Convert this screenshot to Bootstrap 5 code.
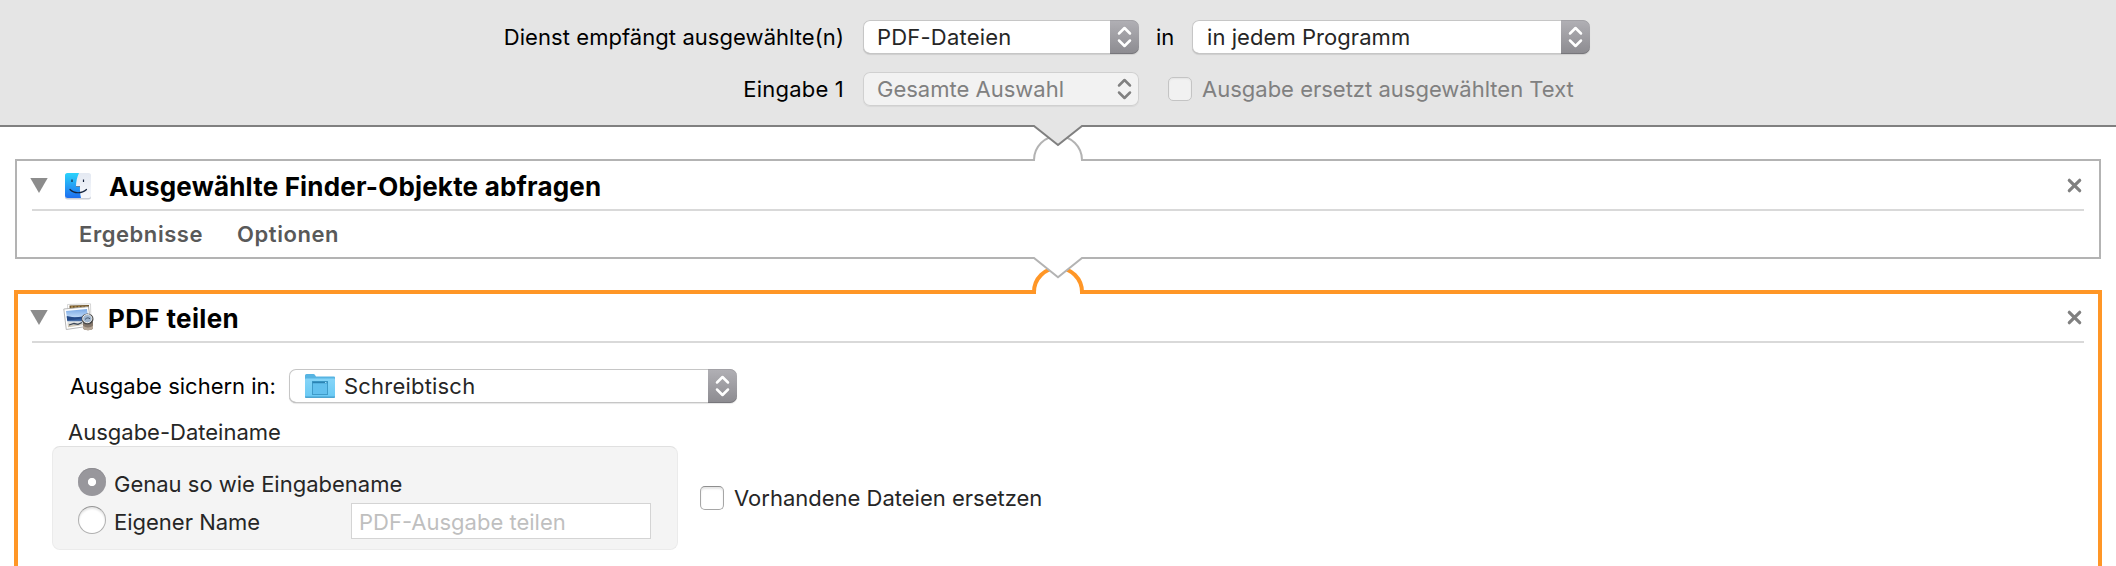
<!DOCTYPE html>
<html lang="de">
<head>
<meta charset="utf-8">
<title>Dienst</title>
<link href="https://cdn.jsdelivr.net/npm/bootstrap@5.3.0/dist/css/bootstrap.min.css" rel="stylesheet">
<style>
body{font:400 22px/34px Inter,"Liberation Sans",sans-serif;color:#262626;background:#fff;height:566px;overflow:hidden;white-space:nowrap}
.topbar{height:127px;background:#e5e5e5;border-bottom:2px solid #808080;padding-top:20px;color:#000}
.topline{height:34px;margin-bottom:18px}
.lead-label{width:844px}
.popup{height:34px;padding:0;font-size:22px;line-height:34px;color:#262626;text-align:left;background:#fff;border:0;border-radius:7px;box-shadow:inset 0 0 0 1px #c6c6c6,inset 0 -1px 0 #a9a9a9,0 1px 1px rgba(0,0,0,.1);overflow:hidden}
.popup:disabled{opacity:1;color:#808080;background:#f2f2f2;box-shadow:inset 0 0 0 1px #d0d0d0,0 1px 1px rgba(0,0,0,.06)}
.popup .stepper{width:29px;height:34px;background:linear-gradient(#b1b0b5,#8c8b90);box-shadow:inset 0 -1px 0 #77767b,inset 0 1px 0 #a2a1a6;border-radius:0 7px 7px 0}
.popup:disabled .stepper{background:none;box-shadow:none}
.box24.form-check-input{width:24px;height:24px;margin:0;border:1px solid #a6a6a6;border-top-color:#8e8e8e;border-radius:5px;background:#fff;box-shadow:inset 0 2px 2px rgba(0,0,0,.1)}
.box24.form-check-input:disabled{opacity:1;border-color:#c4c4c4;background:#f1f1f1;box-shadow:inset 0 1px 2px rgba(0,0,0,.06)}
.dim{color:#808080}
.action{border:2px solid #b3b3b3;position:relative}
.action.selected{border:4px solid #ff9626;margin:0 -1px;height:300px}
.action-head{height:50px;border-bottom:2px solid #d9d9d9;margin:0 15px}
.selected .action-head{margin:-1px 14px 0}
.action-head h2{font-size:26px;font-weight:700;line-height:48px;letter-spacing:.19px;color:#000;margin:2px 0 0 17px}
.caret{margin:17px 0 0 -2px}
.cross{margin:17px 2px 0 auto}
.tabs{font-weight:600;letter-spacing:.56px;color:#595959;gap:34px;padding:6px 0 0 62px;height:46px}
.notch{position:absolute;left:50%;margin-left:-26px;z-index:2}
.groupbox{width:626px;height:104px;background:#f4f4f4;border:1px solid #ebebeb;border-top-color:#e0e0e0;border-radius:8px;padding:20px 0 0 25px}
.radio28.form-check-input{width:28px;height:28px;margin:0 8px 4px 0;border:1px solid #b0b0b0;border-top-color:#969696;background:#fff;box-shadow:inset 0 2px 2px rgba(0,0,0,.1)}
.radio28.form-check-input:checked{border:0;background:radial-gradient(circle,#fff 3.7px,#98979c 4.5px);box-shadow:inset 0 1px 0 #8e8d92}
.field.form-control{width:300px;height:36px;border:1px solid #d4d4d4;border-radius:0;padding:2px 6px 0 7px;font-size:22px;line-height:32px;background:#fff;margin-bottom:2px}
.field::placeholder{color:#bfbfbf;opacity:1}
</style>
</head>
<body>
<svg class="d-none">
  <symbol id="arrows" viewBox="0 0 29 34"><path d="M9 13.500l5.500-5.500 5.500 5.500M9 20.500l5.500 5.500 5.500-5.500" fill="none" stroke="currentColor" stroke-width="2.500" stroke-linecap="round" stroke-linejoin="round"/></symbol>
  <symbol id="tri" viewBox="0 0 18 15"><path d="M.3 0h17.400L9 15z" fill="#8c8c8c"/></symbol>
  <symbol id="x" viewBox="0 0 15 15"><path d="M2.300 2.300l10.400 10.400M12.700 2.300L2.300 12.700" stroke="#808080" stroke-width="3.200" stroke-linecap="round"/></symbol>
</svg>

<header class="topbar">
  <div class="topline d-flex">
    <div class="lead-label text-end" style="letter-spacing:.06px">Dienst empfängt ausgewählte(n)</div>
    <button class="btn popup d-flex justify-content-between" style="width:276px;margin-left:19px"><span style="padding-left:14px;letter-spacing:.2px">PDF-Dateien</span><svg class="stepper text-white"><use href="#arrows"/></svg></button>
    <div style="width:53px;padding-left:17px">in</div>
    <button class="btn popup d-flex justify-content-between" style="width:398px"><span style="padding-left:15px;letter-spacing:.06px">in jedem Programm</span><svg class="stepper text-white"><use href="#arrows"/></svg></button>
  </div>
  <div class="topline d-flex">
    <div class="lead-label text-end" style="letter-spacing:.2px">Eingabe 1</div>
    <button class="btn popup d-flex justify-content-between" style="width:276px;margin-left:19px" disabled><span style="padding-left:14px">Gesamte Auswahl</span><svg class="stepper dim"><use href="#arrows"/></svg></button>
    <label class="d-flex dim" style="padding-left:29px"><input type="checkbox" class="form-check-input box24" style="margin-top:5px" disabled><span style="padding-left:10px">Ausgabe ersetzt ausgewählten Text</span></label>
  </div>
</header>

<main style="padding:32px 15px 0">
  <section class="action" style="height:100px;margin-bottom:31px">
    <svg class="notch" style="top:-36px" width="52" height="42">
      <path d="M2 38V35a24 24 0 0 1 48 0V38z" fill="#fff"/>
      <path d="M2 36V35a24 24 0 0 1 48 0V36" fill="none" stroke="#b3b3b3" stroke-width="2"/>
      <path d="M0 0H52V1H50L26 20 2 1H0z" fill="#e5e5e5"/><path d="M0 1H2L26 20 50 1H52" fill="none" stroke="#808080" stroke-width="2"/>
    </svg>
    <div class="action-head d-flex align-items-start">
      <svg class="caret" width="18" height="15"><use href="#tri"/></svg>
      <svg width="28" height="28" viewBox="0 0 28 28" style="margin:12px 0 0 16px">
        <defs><linearGradient id="fb" x2="0" y2="1"><stop stop-color="#2bd3fb"/><stop offset="1" stop-color="#1d6ff0"/></linearGradient><linearGradient id="fw" x2="0" y2="1"><stop stop-color="#e4e9f2"/><stop offset="1" stop-color="#f6f8fc"/></linearGradient></defs>
        <rect x="1" y="1" width="26" height="25.500" rx="2.500" fill="#c9ced6"/>
        <rect x="1" y="0" width="26" height="25" rx="2.500" fill="url(#fw)"/>
        <path d="M3.500 0H15C13 4 12 9 12 13.500h4c-.3 4 .2 8 1 11.500H3.500A2.500 2.500 0 0 1 1 22.500v-20A2.500 2.500 0 0 1 3.500 0z" fill="url(#fb)"/>
        <path d="M12 13.500h4" stroke="#5c7896" stroke-width=".9"/>
        <path d="M8 6.500v2.500M19.500 6.500v2.500" stroke="#15243d" stroke-width="1.200"/>
        <path d="M6 16.500c4 4.300 12 4.300 16.500 0" fill="none" stroke="#15243d" stroke-width="1.200" stroke-linecap="round"/>
      </svg>
      <h2>Ausgewählte Finder-Objekte abfragen</h2>
      <svg class="cross" width="15" height="15"><use href="#x"/></svg>
    </div>
    <div class="tabs d-flex"><span>Ergebnisse</span><span>Optionen</span></div>
  </section>

  <section class="action selected">
    <svg class="notch" style="top:-37px" width="52" height="42">
      <path d="M2 39V35a24 24 0 0 1 48 0V39z" fill="#fff"/>
      <path d="M2 37V35a24 24 0 0 1 48 0V37" fill="none" stroke="#ff9626" stroke-width="4"/>
      <path d="M2 0H50V1L26 20.300 2 1z" fill="#fff"/><path d="M0 1H2L26 20.300 50 1H52" fill="none" stroke="#b3b3b3" stroke-width="2"/>
    </svg>
    <div class="action-head d-flex align-items-start">
      <svg class="caret" width="18" height="15"><use href="#tri"/></svg>
      <svg width="32" height="30" viewBox="0 0 32 30" style="margin:10px 0 0 15px">
        <defs><linearGradient id="sky" x2="0" y2="1"><stop stop-color="#79a9e6"/><stop offset=".42" stop-color="#b9d5f5"/><stop offset=".48" stop-color="#2f5fa8"/><stop offset=".62" stop-color="#345e9c"/><stop offset=".7" stop-color="#e3e8ec"/><stop offset="1" stop-color="#cbbda4"/></linearGradient></defs>
        <path d="M4.500 1.500L27.500 .8 28 20 5 20z" fill="#fff" stroke="#c4c4c4" stroke-width=".7"/><path d="M6.500 2.500L26 2 26 18 7 18z" fill="#6d5227"/><path d="M8 4h17" stroke="#b08c4b" stroke-width="1.500" stroke-dasharray="2 1.500"/>
        <path d="M.8 6L25.500 3.700 28 22.800 3.300 26.500z" fill="#fff" stroke="#a5a5a5" stroke-width=".8"/>
        <path d="M3 8L24 6 25.800 21.200 5 24.300z" fill="url(#sky)"/>
        <path d="M3.700 13l8 1.500 8-1v2l-15.500 2z" fill="#254a87"/><path d="M6 22l5-1.500 4 .8 4-1.800" fill="none" stroke="#3b4758" stroke-width="1.300"/>
        <path d="M20 18.500h10v6.500c0 3-10 3-10 0z" fill="#85776b"/><path d="M20 22.500c2 2.500 8 2.500 10 0v2.500c-1 3-9 3-10 0z" fill="#b6a797"/>
        <ellipse cx="24.500" cy="16" rx="6" ry="5.500" fill="#494949"/><ellipse cx="24.300" cy="15.600" rx="4.600" ry="4.100" fill="#9fb6cf" stroke="#eee"/><path d="M22 16.500c1.500-2 3.500-2 5-.8" stroke="#41546d" fill="none"/>
      </svg>
      <h2 style="margin-left:13px;letter-spacing:.35px">PDF teilen</h2>
      <svg class="cross" width="15" height="15"><use href="#x"/></svg>
    </div>

    <div class="d-flex" style="padding:26px 0 0 52px;color:#000"><span style="width:219px">Ausgabe sichern in:</span>
      <button class="btn popup d-flex" style="width:448px"><svg width="30" height="25" viewBox="0 0 30 25" style="margin:5px 9px 0 16px">
          <defs><linearGradient id="fo" x2="0" y2="1"><stop stop-color="#86d5f8"/><stop offset="1" stop-color="#6bcaf4"/></linearGradient></defs>
          <path d="M0 1.500Q0 0 1.500 0H8.500Q9.500 0 10 1l1 1.500H29Q30 2.500 30 3.500V23Q30 24 29 24H1Q0 24 0 23z" fill="#57b4e2"/>
          <path d="M0 5.500Q0 4.500 1 4.500H29Q30 4.500 30 5.500V22H0z" fill="url(#fo)"/><path d="M.5 23.500h29" stroke="#4ea4cf"/>
          <rect x="7.500" y="7.500" width="15" height="13" fill="#62c0ee" stroke="#3f9bc9"/><path d="M7.500 8.500h15" stroke="#2b82b3" stroke-width="1.500"/><path d="M20 8.500h1.500" stroke="#9bddfb"/>
        </svg><span style="letter-spacing:.2px">Schreibtisch</span><svg class="stepper ms-auto text-white"><use href="#arrows"/></svg></button>
    </div>

    <div style="padding:12px 0 0 50px;height:43px">Ausgabe-Dateiname</div>

    <div class="d-flex" style="padding-left:34px">
      <div class="groupbox">
        <label class="d-flex align-items-center" style="height:34px"><input type="radio" name="n" class="form-check-input radio28" checked>Genau so wie Eingabename</label>
        <div class="d-flex align-items-center" style="height:34px;margin-top:4px"><label class="d-flex align-items-center" style="width:273px"><input type="radio" name="n" class="form-check-input radio28">Eigener Name</label><input type="text" class="form-control field" placeholder="PDF-Ausgabe teilen"></div>
      </div>
      <label class="d-flex" style="padding:35px 0 0 22px"><input type="checkbox" class="form-check-input box24" style="margin-top:5px"><span style="padding-left:10px">Vorhandene Dateien ersetzen</span></label>
    </div>
  </section>
</main>
<script src="https://cdn.jsdelivr.net/npm/bootstrap@5.3.0/dist/js/bootstrap.bundle.min.js"></script>
</body>
</html>
